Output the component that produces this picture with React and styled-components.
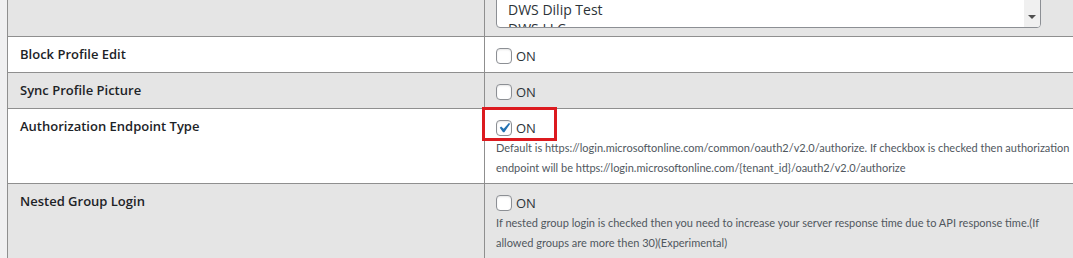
import React from 'react';
import styled, { createGlobalStyle } from 'styled-components';

const GlobalStyle = createGlobalStyle`
  html, body {
    margin: 0;
    background: #f0f0f1;
    overflow: hidden;
  }
  body {
    font-family: "Open Sans", "Liberation Sans", sans-serif;
    color: #1d2327;
  }
`;

const Page = styled.div`
  margin-top: -28px;
  margin-left: 7px;
  width: 1100px;
  border-left: 1px solid #8f8f8f;
`;

const Row = styled.div`
  display: grid;
  grid-template-columns: 477px 1fr;
  background: ${props => (props.$shaded ? '#e5e5e5' : '#fff')};
  border-bottom: 1px solid #8f8f8f;
`;

const Label = styled.div`
  box-sizing: border-box;
  border-right: 1px solid #8f8f8f;
  padding: 7px 12px 8px;
  font-size: 13px;
  font-weight: 600;
  line-height: 20px;
  color: #1d2327;
`;

const Value = styled.div`
  position: relative;
  padding: ${props => (props.$list ? '8px 11px' : '9px 11px 5px')};
`;

const ListBox = styled.div`
  position: relative;
  box-sizing: border-box;
  width: 545px;
  height: 48px;
  border: 1px solid #8c8f94;
  border-radius: 4px;
  background: #fff;
  overflow: hidden;
`;

const ListItem = styled.div`
  padding: 0 11px;
  font-size: 14px;
  line-height: 19px;
  color: #2c3338;
  white-space: nowrap;
`;

const ScrollTrack = styled.div`
  position: absolute;
  top: 0;
  right: 0;
  bottom: 0;
  width: 16px;
  background: #f0f0f0;
`;

const ScrollArrow = styled.div`
  position: absolute;
  right: 4px;
  bottom: 8px;
  width: 0;
  height: 0;
  border-left: 4px solid transparent;
  border-right: 4px solid transparent;
  border-top: 4px solid #505050;
`;

const Toggle = styled.label`
  display: flex;
  align-items: center;
  height: 20px;
  gap: 4px;
  font-size: 13px;
  color: #2c3338;
`;

const Box = styled.span`
  box-sizing: border-box;
  display: inline-flex;
  align-items: center;
  justify-content: center;
  width: 16px;
  height: 16px;
  border: 1px solid #8c8f94;
  border-radius: 4px;
  background: #fff;
  box-shadow: inset 0 1px 2px rgba(0, 0, 0, 0.1);
`;

const Description = styled.p`
  margin: 0;
  max-width: 580px;
  font-family: Lato, "Open Sans", sans-serif;
  font-size: 11px;
  line-height: 20px;
  color: #50575e;
`;

const Highlight = styled.div`
  position: absolute;
  left: -3px;
  top: -2px;
  width: 75px;
  height: 34px;
  box-sizing: border-box;
  border: 3px solid #dc1a1f;
  pointer-events: none;
`;

const Checkbox = ({ checked, text = 'ON' }) => (
  <Toggle>
    <Box>
      {checked && (
        <svg width="20" height="20" viewBox="0 0 20 20" style={{ margin: '-3px' }}>
          <path fill="#2271b1" d="M14.83 4.89l1.34.94-5.81 8.38H9.02L5.78 9.67l1.34-1.25 2.57 2.4z" />
        </svg>
      )}
    </Box>
    {text}
  </Toggle>
);

const rows = [
  { label: 'Block Profile Edit' },
  { label: 'Sync Profile Picture' },
  {
    label: 'Authorization Endpoint Type',
    checked: true,
    highlight: true,
    description:
      'Default is https://login.microsoftonline.com/common/oauth2/v2.0/authorize. If checkbox is checked then authorization endpoint will be https://login.microsoftonline.com/{tenant_id}/oauth2/v2.0/authorize',
  },
  {
    label: 'Nested Group Login',
    description:
      'If nested group login is checked then you need to increase your server response time due to API response time.(If allowed groups are more then 30)(Experimental)',
  },
];

export default function App() {
  return (
    <>
      <GlobalStyle />
      <Page>
        <Row $shaded>
          <Label />
          <Value $list>
            <ListBox>
              <ListItem>DWS Azure</ListItem>
              <ListItem>DWS Dilip Test</ListItem>
              <ListItem>DWS LLC</ListItem>
              <ScrollTrack>
                <ScrollArrow />
              </ScrollTrack>
            </ListBox>
          </Value>
        </Row>
        {rows.map((row, i) => (
          <Row key={row.label} $shaded={i % 2 === 1}>
            <Label>{row.label}</Label>
            <Value>
              <Checkbox checked={row.checked} />
              {row.description && <Description>{row.description}</Description>}
              {row.highlight && <Highlight />}
            </Value>
          </Row>
        ))}
      </Page>
    </>
  );
}
